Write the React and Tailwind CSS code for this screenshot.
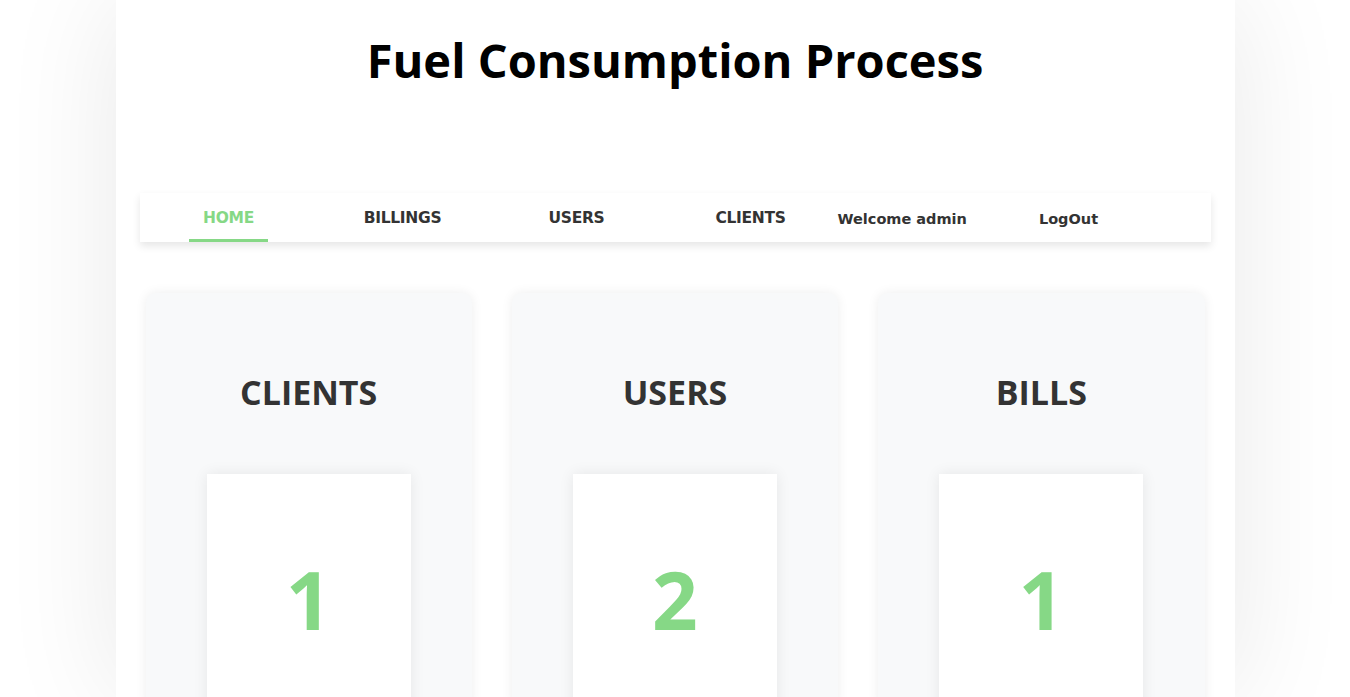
import React from 'react';

const navLinks = [
  { label: 'HOME', active: true },
  { label: 'BILLINGS' },
  { label: 'USERS' },
  { label: 'CLIENTS' },
];

const stats = [
  { title: 'CLIENTS', value: 1 },
  { title: 'USERS', value: 2 },
  { title: 'BILLS', value: 1 },
];

const App = () => {
  return (
    <div className="min-h-screen h-[697px] overflow-hidden bg-white font-['Open_Sans',sans-serif]">
      <div className="mx-auto w-[1119px] h-full bg-white shadow-[0_0_110px_rgba(0,0,0,0.09)] px-6">
        {/* Title */}
        <h1 className="pt-[28px] text-center text-[47px] leading-[64px] font-bold text-black">
          Fuel Consumption Process
        </h1>

        {/* Nav */}
        <nav className="mt-[101px] h-[49px] bg-white shadow-[0_4px_8px_rgba(0,0,0,0.1)] flex items-center pl-[2px] font-['DejaVu_Sans',sans-serif] font-bold text-[#333]">
          {navLinks.map((link) => (
            <div key={link.label} className="w-[174px] flex justify-center h-full text-[15.5px]">
              <a
                href="#"
                className={
                  link.active
                    ? 'h-full flex items-center px-[14px] text-[#86d886] border-b-[3px] border-[#86d886] pt-[5px] tracking-[-0.3px]'
                    : 'h-full flex items-center pt-[3px] tracking-[-0.3px]'
                }
              >
                {link.label}
              </a>
            </div>
          ))}
          <span className="text-[14.5px] pt-[5px]">Welcome admin</span>
          <span className="ml-[72px] text-[14.5px] pt-[5px]">LogOut</span>
        </nav>

        {/* Cards */}
        <div className="mt-[51px] px-[6px] grid grid-cols-3 gap-[40px]">
          {stats.map((s) => (
            <div
              key={s.title}
              className="h-[420px] rounded-[10px] bg-[#f8f9fa] shadow-[0_0_12px_rgba(0,0,0,0.07)] flex flex-col items-center"
            >
              <h2 className="mt-[76px] text-[34px] leading-[46px] font-bold text-[#333]">{s.title}</h2>
              <div className="mt-[59px] w-[204px] h-[300px] bg-white shadow-[0_0_14px_rgba(0,0,0,0.08)] flex justify-center pt-[73px]">
                <span className="text-[80px] leading-[104px] font-bold text-[#86d886]">{s.value}</span>
              </div>
            </div>
          ))}
        </div>
      </div>
    </div>
  );
};

export default App;
